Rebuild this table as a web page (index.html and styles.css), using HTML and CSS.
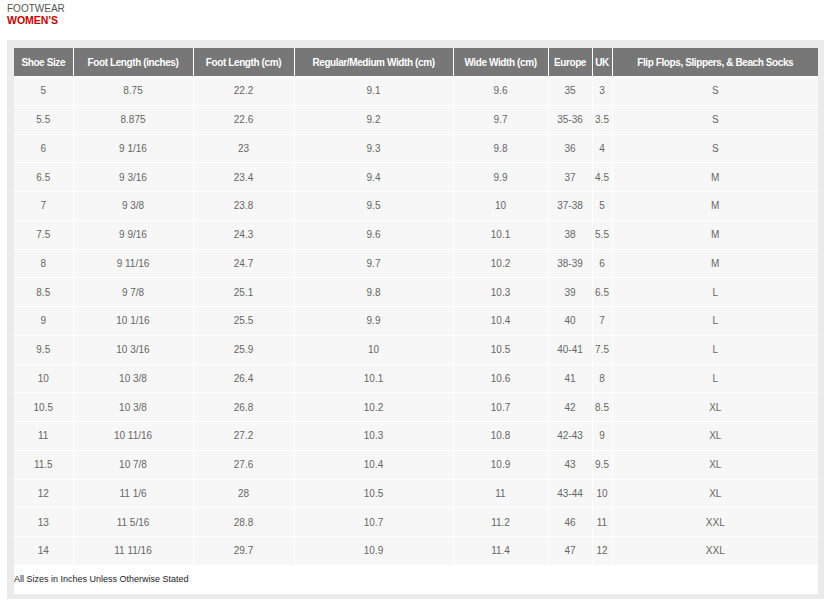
FILE: index.html
```html
<!DOCTYPE html>
<html>
<head>
<meta charset="utf-8">
<link rel="stylesheet" href="styles.css">
</head>
<body>
<div class="page">
  <div class="heading">
    <div class="category">FOOTWEAR</div>
    <div class="title">WOMEN'S</div>
  </div>
  <div class="chart-box">
    <table class="chart">
      <colgroup>
        <col class="c1"><col class="c2"><col class="c3"><col class="c4"><col class="c5"><col class="c6"><col class="c7"><col class="c8">
      </colgroup>
      <thead>
        <tr>
          <th>Shoe Size</th><th>Foot Length (inches)</th><th>Foot Length (cm)</th><th>Regular/Medium Width (cm)</th><th>Wide Width (cm)</th><th>Europe</th><th>UK</th><th>Flip Flops, Slippers, &amp; Beach Socks</th>
        </tr>
      </thead>
      <tbody>
        <tr><td>5</td><td>8.75</td><td>22.2</td><td>9.1</td><td>9.6</td><td>35</td><td>3</td><td>S</td></tr>
        <tr><td>5.5</td><td>8.875</td><td>22.6</td><td>9.2</td><td>9.7</td><td>35-36</td><td>3.5</td><td>S</td></tr>
        <tr><td>6</td><td>9 1/16</td><td>23</td><td>9.3</td><td>9.8</td><td>36</td><td>4</td><td>S</td></tr>
        <tr><td>6.5</td><td>9 3/16</td><td>23.4</td><td>9.4</td><td>9.9</td><td>37</td><td>4.5</td><td>M</td></tr>
        <tr><td>7</td><td>9 3/8</td><td>23.8</td><td>9.5</td><td>10</td><td>37-38</td><td>5</td><td>M</td></tr>
        <tr><td>7.5</td><td>9 9/16</td><td>24.3</td><td>9.6</td><td>10.1</td><td>38</td><td>5.5</td><td>M</td></tr>
        <tr><td>8</td><td>9 11/16</td><td>24.7</td><td>9.7</td><td>10.2</td><td>38-39</td><td>6</td><td>M</td></tr>
        <tr><td>8.5</td><td>9 7/8</td><td>25.1</td><td>9.8</td><td>10.3</td><td>39</td><td>6.5</td><td>L</td></tr>
        <tr><td>9</td><td>10 1/16</td><td>25.5</td><td>9.9</td><td>10.4</td><td>40</td><td>7</td><td>L</td></tr>
        <tr><td>9.5</td><td>10 3/16</td><td>25.9</td><td>10</td><td>10.5</td><td>40-41</td><td>7.5</td><td>L</td></tr>
        <tr><td>10</td><td>10 3/8</td><td>26.4</td><td>10.1</td><td>10.6</td><td>41</td><td>8</td><td>L</td></tr>
        <tr><td>10.5</td><td>10 3/8</td><td>26.8</td><td>10.2</td><td>10.7</td><td>42</td><td>8.5</td><td>XL</td></tr>
        <tr><td>11</td><td>10 11/16</td><td>27.2</td><td>10.3</td><td>10.8</td><td>42-43</td><td>9</td><td>XL</td></tr>
        <tr><td>11.5</td><td>10 7/8</td><td>27.6</td><td>10.4</td><td>10.9</td><td>43</td><td>9.5</td><td>XL</td></tr>
        <tr><td>12</td><td>11 1/6</td><td>28</td><td>10.5</td><td>11</td><td>43-44</td><td>10</td><td>XL</td></tr>
        <tr><td>13</td><td>11 5/16</td><td>28.8</td><td>10.7</td><td>11.2</td><td>46</td><td>11</td><td>XXL</td></tr>
        <tr><td>14</td><td>11 11/16</td><td>29.7</td><td>10.9</td><td>11.4</td><td>47</td><td>12</td><td>XXL</td></tr>
      </tbody>
    </table>
    <div class="note">All Sizes in Inches Unless Otherwise Stated</div>
  </div>
</div>
</body>
</html>
```

FILE: styles.css
```css
html, body {
  margin: 0;
  padding: 0;
  background: #ffffff;
}

body {
  font-family: "Liberation Sans", Arial, sans-serif;
}

.page {
  padding: 3px 4px 0 7px;
}

.heading {
  height: 37px;
}

.category {
  font-size: 10px;
  line-height: 11px;
  color: #555555;
  text-transform: uppercase;
}

.title {
  font-size: 10.5px;
  line-height: 12px;
  font-weight: bold;
  color: #cc0000;
}

.chart-box {
  background: #ebebeb;
  padding: 8px 6px 5px 7px;
}

.chart {
  width: 804px;
  border-collapse: collapse;
  table-layout: fixed;
  background: #f7f7f7;
}

.c1 { width: 59px; }
.c2 { width: 120px; }
.c3 { width: 101px; }
.c4 { width: 159px; }
.c5 { width: 95px; }
.c6 { width: 44px; }
.c7 { width: 20px; }
.c8 { width: 206px; }

.chart th {
  background: #777777;
  color: #ffffff;
  font-size: 10px;
  font-weight: bold;
  height: 28px;
  padding: 0;
  border: 1px solid #ffffff;
  border-top: none;
  text-align: center;
  letter-spacing: -0.4px;
}

.chart th:first-child,
.chart td:first-child {
  border-left: none;
}

.chart th:last-child,
.chart td:last-child {
  border-right: none;
}

.chart td {
  height: 27.75px;
  padding: 0;
  border: 1px solid #ffffff;
  font-size: 10px;
  color: #666666;
  text-align: center;
}

.chart tbody tr:last-child td {
  border-bottom: none;
}

.note {
  background: #ffffff;
  width: 804px;
  height: 29px;
  line-height: 29px;
  font-size: 9px;
  color: #222222;
}
```
